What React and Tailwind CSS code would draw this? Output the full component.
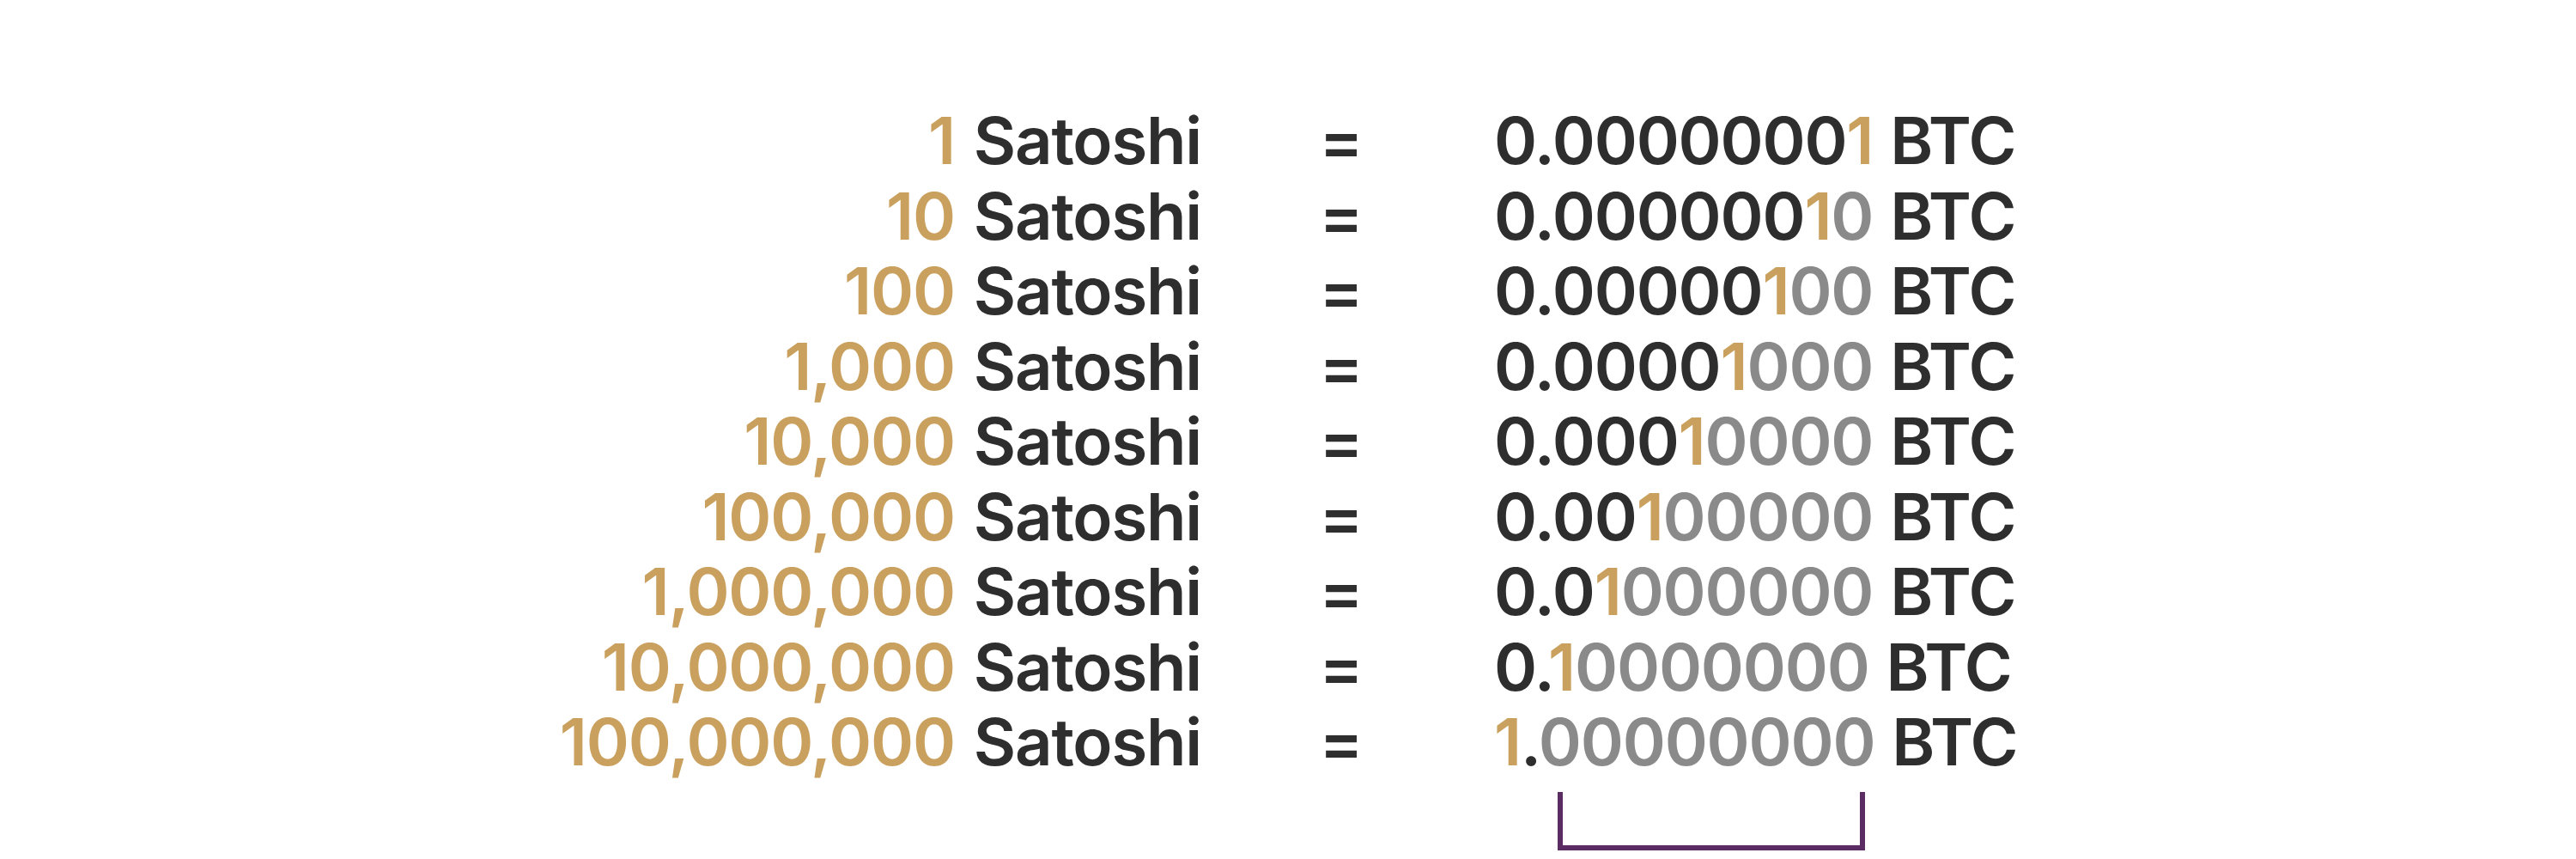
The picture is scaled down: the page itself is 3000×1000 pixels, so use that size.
import React from "react";

const rows = [
  { sat: "1", btc: "0.00000001" },
  { sat: "10", btc: "0.00000010" },
  { sat: "100", btc: "0.00000100" },
  { sat: "1,000", btc: "0.00001000" },
  { sat: "10,000", btc: "0.00010000" },
  { sat: "100,000", btc: "0.00100000" },
  { sat: "1,000,000", btc: "0.01000000" },
  { sat: "10,000,000", btc: "0.10000000" },
  { sat: "100,000,000", btc: "1.00000000" },
];

function BtcValue({ value }) {
  const idx = value.indexOf("1");
  return (
    <span>
      {value.split("").map((ch, i) => {
        let cls = "text-[#2e2e2e]";
        if (i === idx) cls = "text-[#c9a05e]";
        else if (i > idx && ch !== ".") cls = "text-[#8a8a8a]";
        return (
          <span key={i} className={cls}>
            {ch}
          </span>
        );
      })}
    </span>
  );
}

export default function App() {
  return (
    <div
      className="w-[3000px] h-[1000px] bg-white overflow-hidden"
      style={{ fontFamily: "Inter, 'Liberation Sans', sans-serif" }}
    >
      <div className="pt-[120px] pl-[552px]">
        <div className="grid grid-cols-[847px_341px_700px] text-[76px] leading-[87.5px] font-semibold tracking-[-1.2px]">
          {rows.map((r, i) => (
            <React.Fragment key={i}>
              <div className="text-right whitespace-nowrap">
                <span className="text-[#c9a05e] mr-[4px]">{r.sat}</span>
                <span className="text-[#2e2e2e]"> Satoshi</span>
              </div>
              <div className="text-center pr-[16px] text-[#2e2e2e]">=</div>
              <div className="whitespace-nowrap">
                <BtcValue value={r.btc} />
                <span className="text-[#2e2e2e] ml-[2px]"> BTC</span>
              </div>
            </React.Fragment>
          ))}
          <div />
          <div />
          <div className="pt-[14px] pl-[74px]">
            <div className="w-[358px] h-[68px] border-l-[6px] border-r-[6px] border-b-[6px] border-[#5b2c63]" />
          </div>
        </div>
      </div>
    </div>
  );
}
